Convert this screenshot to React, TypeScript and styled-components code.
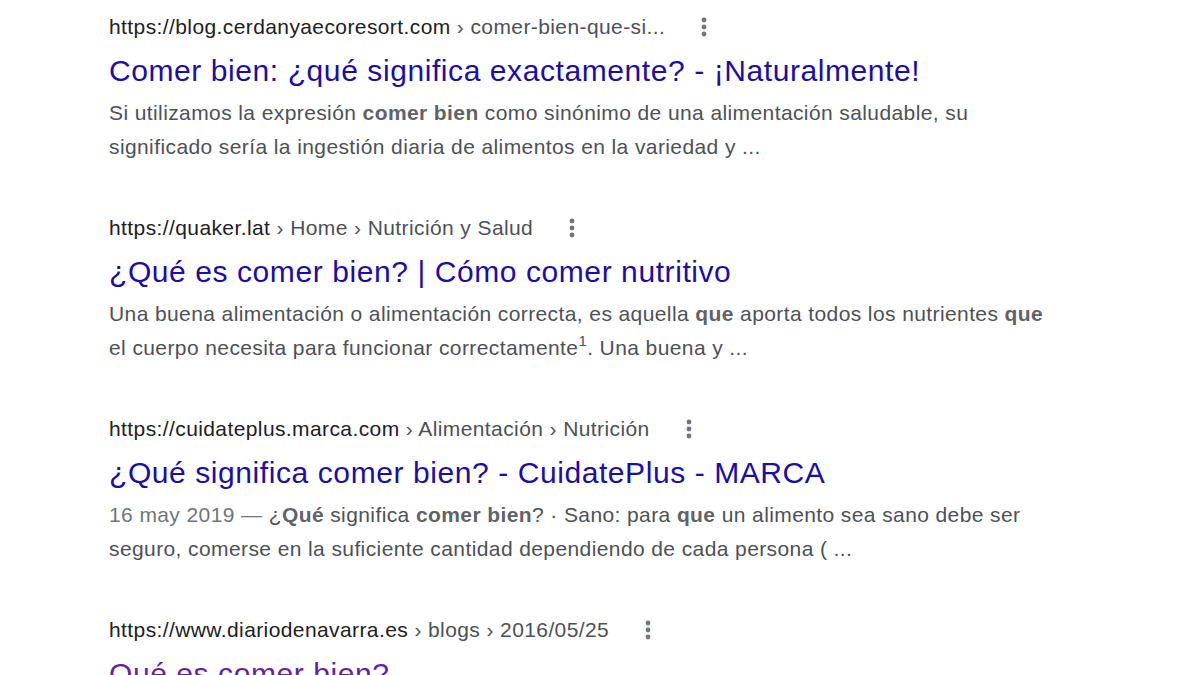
import React from "react";
import styled, { createGlobalStyle } from "styled-components";

const Global = createGlobalStyle`
  html, body { margin: 0; padding: 0; background: #ffffff; }
  body { font-family: "Liberation Sans", Arial, sans-serif; }
`;

const Page = styled.main`
  width: 1200px;
  height: 675px;
  overflow: hidden;
  padding: 12px 0 0 109px;
  box-sizing: border-box;
`;

const Result = styled.section`
  display: flex;
  flex-direction: column;
  margin-bottom: 49px;
`;

const UrlRow = styled.div`
  display: flex;
  align-items: center;
  height: 30px;
  font-size: 21px;
  letter-spacing: 0.4px;
  line-height: 30px;
  white-space: pre;
`;

const Host = styled.span`
  color: #202124;
`;

const Crumbs = styled.span`
  color: #4d5156;
`;

const MoreButton = styled.span`
  display: inline-flex;
  align-items: center;
  justify-content: center;
  width: 20px;
  height: 30px;
  margin-left: 29px;
`;

const Title = styled.h3<{ $visited?: boolean }>`
  margin: 8px 0 0;
  font-size: 30px;
  font-weight: 400;
  letter-spacing: 0.58px;
  line-height: 42px;
  color: ${(p) => (p.$visited ? "#681da8" : "#1a0dab")};
  white-space: nowrap;
`;

const Snippet = styled.div`
  margin-top: 4px;
  font-size: 21px;
  letter-spacing: 0.4px;
  line-height: 34px;
  color: #4d5156;
  b { font-weight: 700; color: #5f6368; }
  sup { font-size: 15px; line-height: 0; vertical-align: 9px; }
`;

const Line = styled.span`
  display: block;
  white-space: nowrap;
`;

const DateText = styled.span`
  color: #70757a;
`;

const Dots = () => (
  <svg width="8" height="24" viewBox="0 0 8 24" aria-hidden>
    <circle cx="4" cy="5" r="2.4" fill="#70757a" />
    <circle cx="4" cy="12" r="2.4" fill="#70757a" />
    <circle cx="4" cy="19" r="2.4" fill="#70757a" />
  </svg>
);

const Url = ({ host, crumbs }: { host: string; crumbs: string }) => (
  <UrlRow>
    <Host>{host}</Host>
    <Crumbs>{crumbs}</Crumbs>
    <MoreButton>
      <Dots />
    </MoreButton>
  </UrlRow>
);

export default function App() {
  return (
    <>
      <Global />
      <Page>
        <Result>
          <Url host="https://blog.cerdanyaecoresort.com" crumbs=" › comer-bien-que-si..." />
          <Title>Comer bien: ¿qué significa exactamente? - ¡Naturalmente!</Title>
          <Snippet>
            <Line>
              Si utilizamos la expresión <b>comer bien</b> como sinónimo de una alimentación saludable, su
            </Line>
            <Line>significado sería la ingestión diaria de alimentos en la variedad y ...</Line>
          </Snippet>
        </Result>
        <Result>
          <Url host="https://quaker.lat" crumbs=" › Home › Nutrición y Salud" />
          <Title>¿Qué es comer bien? | Cómo comer nutritivo</Title>
          <Snippet>
            <Line>
              Una buena alimentación o alimentación correcta, es aquella <b>que</b> aporta todos los nutrientes <b>que</b>
            </Line>
            <Line>
              el cuerpo necesita para funcionar correctamente<sup>1</sup>. Una buena y ...
            </Line>
          </Snippet>
        </Result>
        <Result>
          <Url host="https://cuidateplus.marca.com" crumbs=" › Alimentación › Nutrición" />
          <Title>¿Qué significa comer bien? - CuidatePlus - MARCA</Title>
          <Snippet>
            <Line>
              <DateText>16 may 2019 — </DateText>¿<b>Qué</b> significa <b>comer bien</b>? · Sano: para <b>que</b> un alimento sea sano debe ser
            </Line>
            <Line>seguro, comerse en la suficiente cantidad dependiendo de cada persona ( ...</Line>
          </Snippet>
        </Result>
        <Result>
          <Url host="https://www.diariodenavarra.es" crumbs=" › blogs › 2016/05/25" />
          <Title $visited>Qué es comer bien?</Title>
        </Result>
      </Page>
    </>
  );
}
